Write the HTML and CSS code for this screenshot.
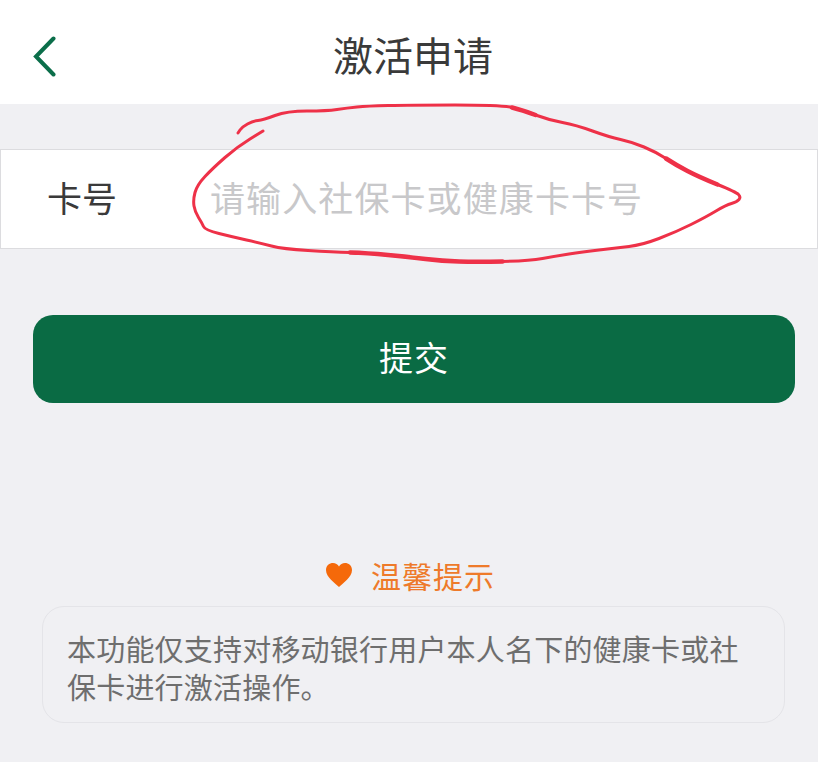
FILE: index.html
```html
<!DOCTYPE html>
<html lang="zh-CN">
<head>
<meta charset="utf-8">
<title>激活申请</title>
<link rel="stylesheet" href="styles.css">
</head>
<body>
<div class="page">
  <header class="nav">
    <svg class="back" width="24" height="42" viewBox="0 0 24 42" aria-hidden="true"><path d="M20.500 2.500L3 20.500L20.500 38.500" fill="none" stroke="#0b6e4a" stroke-width="4" stroke-linecap="round" stroke-linejoin="miter"/></svg>
    <h1 class="nav-title">激活申请</h1>
  </header>
  <section class="field">
    <span class="field-label">卡号</span>
    <span class="field-placeholder">请输入社保卡或健康卡卡号</span>
  </section>
  <button class="submit" type="button"><span class="submit-text">提交</span></button>
  <div class="tip-title">
    <svg class="heart" width="28" height="26" viewBox="0 0 28 26" aria-hidden="true"><path d="M14 25C10 21 1 15.500 1 8C1 3.500 4.500 1 8 1C10.500 1 12.800 2.300 14 4.500C15.200 2.300 17.500 1 20 1C23.500 1 27 3.500 27 8C27 15.500 18 21 14 25Z" fill="#f5690a"/></svg>
    <span>温馨提示</span>
  </div>
  <div class="tip-box">本功能仅支持对移动银行用户本人名下的健康卡或社保卡进行激活操作。</div>
  <svg class="scribble" width="818" height="762" viewBox="0 0 818 762" aria-hidden="true">
    <path class="scribble-line" d="M238 133L240 130Q242 127 247.500 124Q253 121 258 120.500Q263 120 275 115.500Q287 111 307 111Q327 111 337 109.500Q347 108 357 107Q367 106 388 105.500Q409 105 455 105Q502 105 512 107.500Q522 110 535.500 115Q549 120 562.500 122.500Q576 125 592.500 131Q609 137 620.500 139.500Q632 142 644 147Q656 152 666 158.500Q676 165 687.500 171Q699 177 717.500 184.500Q736 192 738.500 194.500Q741 197 739 199.500Q737 202 731.500 203.500Q726 205 716 211Q706 217 691 224.500Q676 232 659 238.500Q642 245 629 246.500Q616 248 599 250Q582 252 569 254Q556 256 542.500 258.500Q529 261 502.500 261.500Q476 262 459 261.500Q442 261 425.500 259Q409 257 388 255Q367 253 350 252.500Q333 252 308 250.500Q283 249 271.500 246Q260 243 246.500 240Q233 237 219 233.500Q205 230 203.500 226.500Q202 223 198.500 217.500Q195 212 194 206Q193 200 195 192.500Q197 185 205 176.500Q213 168 225 157.500Q237 147 250 139L263 131"/>
    <path class="scribble-thick" d="M502.500 261.500Q476 262 459 261.500Q442 261 425.500 259Q409 257 388 255Q367 253 350 252.500"/>
    <path class="scribble-thick" d="M512 107.500Q522 110 535.500 115M666 158.500Q676 165 687.500 171Q699 177 717.500 184.500"/>
  </svg>
</div>
</body>
</html>
```
FILE: styles.css
```css
* { box-sizing: border-box; }
html, body { margin: 0; padding: 0; }
body {
  width: 818px;
  height: 762px;
  overflow: hidden;
  background: #f0f0f3;
  font-family: "Noto Sans CJK SC", "Noto Sans", sans-serif;
}
.page {
  position: relative;
  height: 762px;
  display: flex;
  flex-direction: column;
}
.nav {
  position: relative;
  height: 104px;
  background: #fff;
  display: flex;
  align-items: center;
  justify-content: center;
}
.back {
  position: absolute;
  left: 33px;
  top: 36px;
}
.nav-title {
  margin: 4px 0 0 8px;
  font-size: 40px;
  font-weight: 400;
  letter-spacing: 0;
  color: #3a3a3a;
  line-height: 1;
}
.field {
  margin-top: 45px;
  height: 100px;
  background: #fff;
  border: 1px solid #dcdcdf;
  display: flex;
  align-items: center;
  padding: 0 0 5px 46px;
}
.field-label {
  width: 163px;
  font-size: 35px;
  letter-spacing: 0;
  color: #3a3a3a;
}
.field-placeholder {
  font-size: 35px;
  letter-spacing: 1.1px;
  color: #c8c8ca;
}
.submit {
  margin: 66px 23px 0 33px;
  height: 88px;
  border: 0;
  border-radius: 20px;
  padding: 0 0 5px;
  background: #0a6b44;
  color: #fff;
  font: inherit;
  font-size: 34px;
  letter-spacing: 1px;
}
.tip-title {
  margin-top: 149px;
  height: 46px;
  display: flex;
  align-items: center;
  justify-content: center;
  gap: 18px;
  font-size: 30px;
  letter-spacing: 1px;
  color: #ee7a2a;
  padding-left: 2px;
}
.tip-box {
  margin: 8px 33px 0 42px;
  height: 117px;
  padding: 22px 24px 0;
  border: 1px solid #e4e4e8;
  border-radius: 22px;
  font-size: 29px;
  letter-spacing: 0.2px;
  line-height: 38px;
  color: #6e6e6e;
}
.scribble {
  position: absolute;
  left: 0;
  top: 0;
  pointer-events: none;
}
.scribble-line,
.scribble-thick {
  fill: none;
  stroke: #ee3148;
  stroke-linejoin: round;
  stroke-linecap: round;
}
.scribble-line { stroke-width: 3; }
.scribble-thick { stroke-width: 4.500; }
```
